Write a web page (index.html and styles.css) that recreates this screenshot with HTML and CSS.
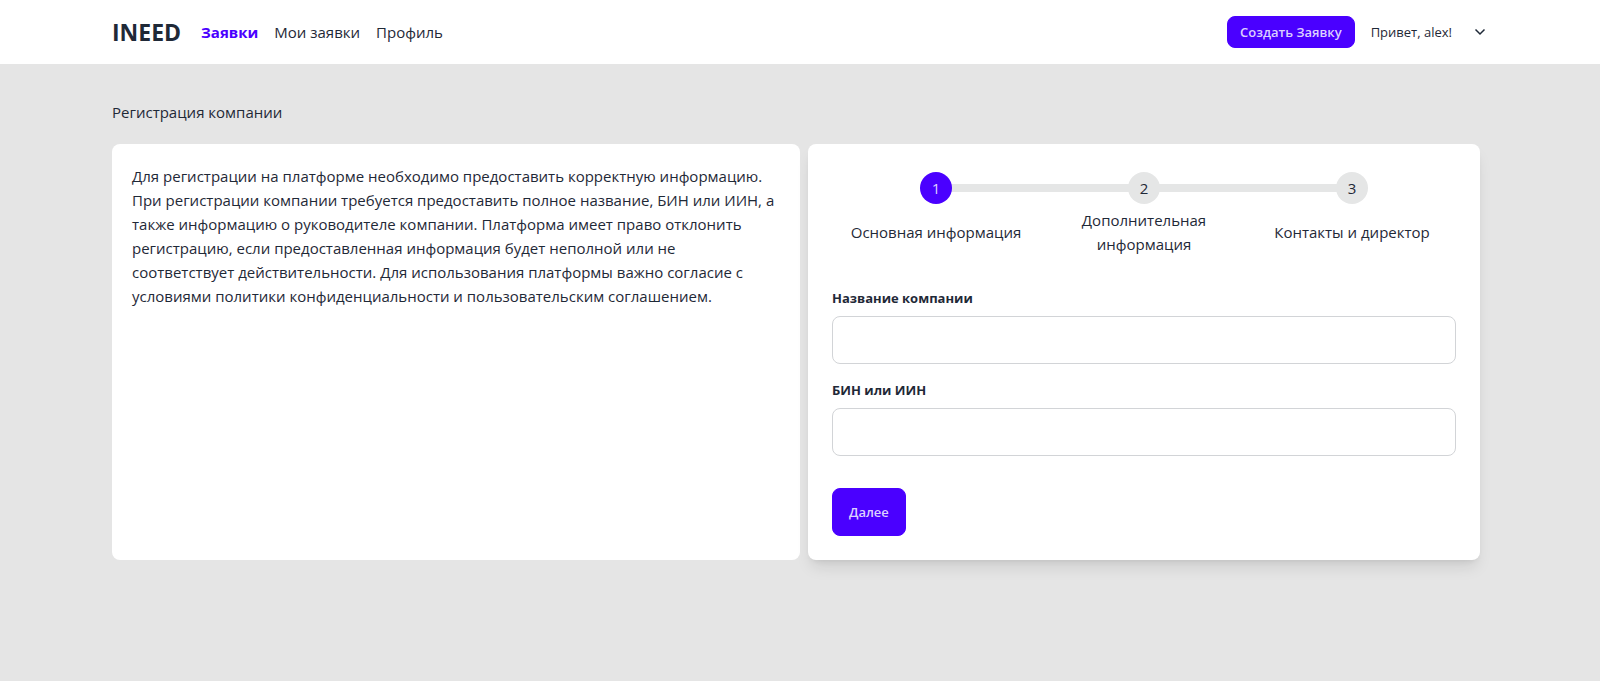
FILE: index.html
```html
<!DOCTYPE html>
<html lang="ru">
<head>
<meta charset="utf-8">
<meta name="viewport" content="width=device-width, initial-scale=1">
<title>INEED — Регистрация компании</title>
<link rel="stylesheet" href="styles.css">
</head>
<body>
<header class="navbar">
  <a class="logo" href="#">INEED</a>
  <nav class="nav">
    <a class="nav-link active" href="#">Заявки</a>
    <a class="nav-link" href="#">Мои заявки</a>
    <a class="nav-link" href="#">Профиль</a>
  </nav>
  <div class="account">
    <button class="btn btn-small" type="button">Создать Заявку</button>
    <button class="user-menu" type="button">
      <span>Привет, alex!</span>
      <svg class="chevron" viewBox="0 0 32 32" aria-hidden="true"><path d="M7 11l9 9 9-9"/></svg>
    </button>
  </div>
</header>
<main class="page">
  <h1 class="title">Регистрация компании</h1>
  <div class="columns">
    <section class="card info">
      <p class="info-text">Для регистрации на платформе необходимо предоставить корректную информацию. При регистрации компании требуется предоставить полное название, БИН или ИИН, а также информацию о руководителе компании. Платформа имеет право отклонить регистрацию, если предоставленная информация будет неполной или не соответствует действительности. Для использования платформы важно согласие с условиями политики конфиденциальности и пользовательским соглашением.</p>
    </section>
    <section class="card form-card">
      <ol class="steps">
        <li class="step current"><span class="dot">1</span><span class="step-label">Основная информация</span></li>
        <li class="step"><span class="dot">2</span><span class="step-label">Дополнительная информация</span></li>
        <li class="step"><span class="dot">3</span><span class="step-label">Контакты и директор</span></li>
      </ol>
      <form class="form">
        <div class="field">
          <label class="label" for="company">Название компании</label>
          <input class="input" id="company" type="text">
        </div>
        <div class="field">
          <label class="label" for="bin">БИН или ИИН</label>
          <input class="input" id="bin" type="text">
        </div>
        <button class="btn btn-next" type="button">Далее</button>
      </form>
    </section>
  </div>
</main>
</body>
</html>
```
FILE: styles.css
```css
* { box-sizing: border-box; margin: 0; padding: 0; }

body {
  min-height: 100vh;
  background: #e5e5e5;
  color: #1f2937;
  font: 15px/24px "Segoe UI", "Open Sans", "Noto Sans", sans-serif;
}

.navbar {
  display: flex;
  align-items: center;
  height: 64px;
  padding: 0 112px;
  background: #fff;
}

.logo {
  margin-right: 20px;
  color: inherit;
  font-size: 23px;
  line-height: 32px;
  font-weight: 700;
  text-decoration: none;
}

.nav { display: flex; gap: 16px; }
.nav-link { color: inherit; text-decoration: none; }
.nav-link.active { color: #4a00ff; font-weight: 700; }

.account {
  display: flex;
  align-items: center;
  gap: 16px;
  margin-left: auto;
}

.btn {
  border: 1px solid #4a00ff;
  border-radius: 8px;
  background: #4a00ff;
  color: #dcd0ff;
  font-family: inherit;
  font-size: 13px;
  font-weight: 600;
  cursor: pointer;
}

.btn-small { height: 32px; padding: 0 12px; }

.user-menu {
  display: flex;
  align-items: center;
  gap: 20px;
  border: 0;
  background: none;
  color: inherit;
  font-family: inherit;
  font-size: 13px;
  line-height: 20px;
  cursor: pointer;
}

.chevron {
  width: 16px;
  height: 16px;
  fill: none;
  stroke: #1f2937;
  stroke-width: 3;
}

.page { padding: 36px 112px; }

.title { margin-bottom: 20px; font-size: 15px; line-height: 24px; font-weight: 400; }

.columns { display: grid; grid-template-columns: 1fr 1fr; }

.card { border-radius: 8px; background: #fff; }

.info { padding: 20px; }

.form-card {
  margin: 0 8px;
  padding: 24px;
  box-shadow: 0 10px 15px -3px rgba(0, 0, 0, 0.1), 0 4px 6px -4px rgba(0, 0, 0, 0.1);
}

.steps {
  display: grid;
  grid-template-columns: repeat(3, 1fr);
  list-style: none;
  text-align: center;
}

.step {
  display: grid;
  grid-template-rows: 40px 1fr;
  place-items: center;
}

.dot {
  grid-area: 1 / 1;
  z-index: 1;
  width: 32px;
  height: 32px;
  border-radius: 50%;
  background: #e5e6e6;
  line-height: 32px;
}

.step + .step::before {
  content: "";
  grid-area: 1 / 1;
  width: 100%;
  height: 8px;
  margin-left: -100%;
  background: #e5e6e6;
}

.step.current .dot { z-index: 2; background: #4a00ff; color: #dcd0ff; }

.form { margin-top: 24px; }
.field + .field { margin-top: 8px; }

.label {
  display: block;
  padding: 8px 0;
  font-size: 13px;
  line-height: 20px;
  font-weight: 700;
}

.input {
  display: block;
  width: 100%;
  height: 48px;
  padding: 0 16px;
  border: 1px solid #d2d4d7;
  border-radius: 8px;
  background: #fff;
  color: inherit;
  font: inherit;
}

.btn-next { height: 48px; margin-top: 32px; padding: 0 16px; }
```
